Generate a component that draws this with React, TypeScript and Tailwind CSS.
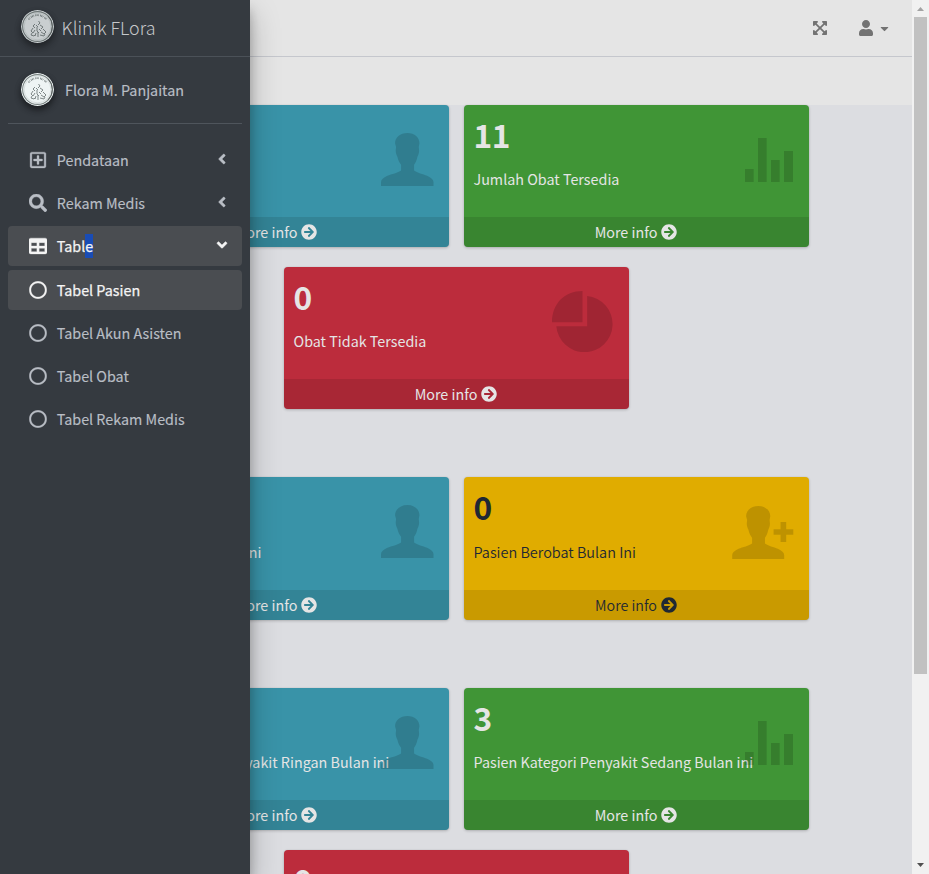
import type { ReactNode } from "react";
import {
  FaAngleDown,
  FaAngleLeft,
  FaArrowCircleRight,
  FaCaretDown,
  FaExpandArrowsAlt,
  FaRegCircle,
  FaRegPlusSquare,
  FaSearch,
  FaTable,
  FaUser,
} from "react-icons/fa";

const PERSON =
  "M79 0C101 0 115 14 115 31L113 42L114 53C114 60 112 66 109 72C107 83 103 91 99 96V113C108 120 126 124 138 129C150 135 157 140 157 148V160H0V148C0 140 7 135 19 129C31 124 51 120 60 113V96C56 91 51 83 49 72C46 66 44 60 44 53L45 42L42 31C42 14 57 0 79 0Z";

function PersonIcon() {
  return (
    <svg className="absolute right-[15.5px] top-7 h-[53px] w-[52.5px]" viewBox="0 0 157 160" preserveAspectRatio="none" fill="black" fillOpacity=".15">
      <path d={PERSON} />
    </svg>
  );
}

function PersonAddIcon() {
  return (
    <svg className="absolute right-[15.5px] top-[29px] h-[53px] w-[61.5px]" viewBox="0 0 184.5 160" fill="black" fillOpacity=".15">
      <path d={PERSON} />
      <path d="M146 48h17v22h21.5v17H163v22h-17V87h-21V70h21z" />
    </svg>
  );
}

function BarsIcon() {
  return (
    <svg className="absolute right-4 top-[33px] h-11 w-12" viewBox="0 0 144 132" fill="black" fillOpacity=".15">
      <path d="M0 93h26v39H0zM39 0h26v132H39zM78 66h26v66H78zM117 39h27v93h-27z" />
    </svg>
  );
}

function PieIcon() {
  return (
    <svg className="absolute right-4 top-6 h-[61px] w-[61px]" viewBox="0 0 184 184" fill="black" fillOpacity=".15">
      <path d="M92 0V94H0C0 38 38 0 92 0ZM106 15A85 85 0 1 1 13 106H106Z" />
    </svg>
  );
}

type BoxProps = {
  color: string;
  height?: string;
  value: string;
  label: string;
  icon: ReactNode;
  dark?: boolean;
};

function SmallBox({ color, height = "h-[142px]", value, label, icon, dark }: BoxProps) {
  return (
    <div
      className={
        "relative flex w-[345px] shrink-0 flex-col overflow-hidden rounded-[4px] shadow-[0_0_1px_rgba(0,0,0,.125),0_1px_3px_rgba(0,0,0,.2)] " +
        height + " " + color + " " + (dark ? "font-[350] text-[#1f2833]" : "text-[#e5e5e5]")
      }
    >
      <div className="flex-1 px-[9.5px] pt-[9px]">
        <h3 className="h-[42px] text-[31.7px] font-bold leading-[40px] tracking-[-0.5px]">{value}</h3>
        <p
          className={
            "whitespace-nowrap leading-6 " +
            (height === "h-[142px]" ? "mt-[11px] " : "mt-3 ") +
            (dark ? "text-[14.48px]" : "text-[14.33px]")
          }
        >
          {label}
        </p>
      </div>
      {icon}
      <div className="flex h-[30px] items-center justify-center gap-[3.5px] bg-black/10 pr-[1.5px]">
        <span className="text-[14.33px] leading-6">More info</span>
        <FaArrowCircleRight size={16} />
      </div>
    </div>
  );
}

function Seal({ dim }: { dim?: boolean }) {
  return (
    <svg
      className={"h-[33px] w-[33px] shrink-0 rounded-full shadow-[0_3px_6px_rgba(0,0,0,.3),0_4px_7px_rgba(0,0,0,.3)] " + (dim ? "opacity-80" : "")}
      viewBox="0 0 33 33"
      fill="none"
    >
      <circle cx="16.5" cy="16.5" r="16.5" fill="#eef4f4" />
      <circle cx="16.5" cy="16.5" r="14.9" stroke="#7b8483" strokeWidth="1.1" />
      <path d="M27 6A15 15 0 0 1 27 27" stroke="#59605f" strokeWidth=".9" />
      <circle cx="16.5" cy="16.5" r="13.4" stroke="#c3caca" strokeWidth=".5" />
      <path d="M7.5 9.5A11.5 11.5 0 0 1 25.5 9.5" stroke="#7a8383" strokeWidth="1.8" strokeDasharray="1 .6 .6 1.2 .8 .5" />
      <path
        d="M17.5 11l1.5 2-2 2M14 14l-2 2 2 2M19 15l3 2-2 2M12 18l-2 3 2 2 2-3M16 17v4l2 2M22 19l3 3-2 2-3-2M11 23l-1 2 3 1 2-2M17 22v5M19 25l4 1 1-2M14 26l1-3M15 15l2 2M20 21l-2-2"
        stroke="#7f8888"
        strokeWidth="1"
      />
    </svg>
  );
}

type ItemProps = { icon: ReactNode; children: ReactNode; arrow?: ReactNode; active?: boolean };

function NavItem({ icon, children, arrow, active }: ItemProps) {
  return (
    <li
      className={
        "flex h-10 items-center rounded-[4px] pl-5 pr-3 " +
        (active
          ? "bg-[#4a4d51] text-[#f4f4f4] [-webkit-text-stroke:0.25px_#f4f4f4]"
          : "text-[#b9bec5] [-webkit-text-stroke:0.15px_#b9bec5]")
      }
    >
      <span className="-mt-px flex w-5 justify-center [&_svg]:[stroke-width:10px]">{icon}</span>
      <span className="ml-[8.8px] flex-1 whitespace-nowrap text-[14.33px] leading-6">{children}</span>
      <span className="-mt-[2px] [&_svg]:[stroke-width:14px]">{arrow}</span>
    </li>
  );
}

function Sidebar() {
  return (
    <aside className="absolute inset-y-0 left-0 z-10 w-[250px] bg-[#353a40] shadow-[0_14px_28px_rgba(0,0,0,.25),0_10px_10px_rgba(0,0,0,.22)]">
      <div className="flex h-[57px] items-start border-b border-[#4b5158] pl-[21px] pt-[10px]">
        <Seal dim />
        <span className="ml-[7.5px] mt-[2px] text-[17.9px] font-light leading-[30px] text-[#c6c8cb]">Klinik FLora</span>
      </div>
      <div className="mx-2 flex h-[67px] items-start border-b border-[#4f555c] pl-[13px] pt-4">
        <Seal />
        <span className="ml-[11px] mt-[5px] text-[14.33px] leading-6 text-[#b9bec5] [-webkit-text-stroke:0.15px_#b9bec5]">
          Flora M. Panjaitan
        </span>
      </div>
      <ul className="mx-2 mt-4 flex flex-col gap-[3px]">
        <NavItem icon={<FaRegPlusSquare size={18} />} arrow={<FaAngleLeft size={16} />}>Pendataan</NavItem>
        <NavItem icon={<FaSearch size={18} />} arrow={<FaAngleLeft size={16} />}>Rekam Medis</NavItem>
        <NavItem icon={<FaTable size={18} />} arrow={<FaAngleDown size={16} />} active>
          Tabl<span className="inline-block h-6 bg-[#194cb5] align-top">e</span>
        </NavItem>
      </ul>
      <ul className="mx-2 mt-1 flex flex-col gap-[3px]">
        <NavItem icon={<FaRegCircle size={18} />} active>Tabel Pasien</NavItem>
        <NavItem icon={<FaRegCircle size={18} />}>Tabel Akun Asisten</NavItem>
        <NavItem icon={<FaRegCircle size={18} />}>Tabel Obat</NavItem>
        <NavItem icon={<FaRegCircle size={18} />}>Tabel Rekam Medis</NavItem>
      </ul>
    </aside>
  );
}

function Scrollbar() {
  return (
    <div className="flex w-[17px] shrink-0 flex-col items-center bg-[#f1f1f1]">
      <div className="flex h-[17px] shrink-0 items-center">
        <svg width="7" height="4" viewBox="0 0 7 4" fill="#a3a3a3"><path d="M3.5 0L7 4H0z" /></svg>
      </div>
      <div className="h-[657px] w-[13px] bg-[#c1c1c1]" />
      <div className="mt-auto flex h-[18px] shrink-0 items-center">
        <svg width="7" height="4" viewBox="0 0 7 4" fill="#505050"><path d="M0 0H7L3.5 4z" /></svg>
      </div>
    </div>
  );
}

export default function App() {
  return (
    <div className="relative flex h-[874px] w-[929px] overflow-hidden bg-[#dcdde1] font-['Noto_Sans_CJK_SC','Source_Sans_Pro',sans-serif]">
      <div className="flex w-[912px] shrink-0 flex-col">
        <header className="flex h-[57px] shrink-0 items-center justify-end border-b border-[#c5c7cd] bg-[#e5e5e5] pr-[21.5px] text-[#737373]">
          <FaExpandArrowsAlt size={16} />
          <FaUser size={16} className="ml-[30px]" />
          <FaCaretDown size={13} className="ml-[3.5px]" />
        </header>
        <div className="h-12 shrink-0 bg-[#e5e5e5]" />
        <main className="flex flex-col pl-[104px]">
          <section className="flex w-[705px] flex-col items-center gap-5">
            <div className="flex gap-[15px]">
              <SmallBox color="bg-[#3993a8]" value="5" label="Jumlah Pasien" icon={<PersonIcon />} />
              <SmallBox color="bg-[#409536]" value="11" label="Jumlah Obat Tersedia" icon={<BarsIcon />} />
            </div>
            <SmallBox color="bg-[#bc2c3c]" value="0" label="Obat Tidak Tersedia" icon={<PieIcon />} />
          </section>
          <section className="mt-[68px] flex w-[705px] gap-[15px]">
            <SmallBox height="h-[143px]" color="bg-[#3993a8]" value="0" label="Pasien Balita Bulan Ini" icon={<PersonIcon />} />
            <SmallBox height="h-[143px]" color="bg-[#e0ac00]" value="0" label="Pasien Berobat Bulan Ini" icon={<PersonAddIcon />} dark />
          </section>
          <section className="mt-[68px] flex w-[705px] flex-col items-center gap-5">
            <div className="flex gap-[15px]">
              <SmallBox color="bg-[#3993a8]" value="2" label="Pasien Kategori Penyakit Ringan Bulan ini" icon={<PersonIcon />} />
              <SmallBox color="bg-[#409536]" value="3" label="Pasien Kategori Penyakit Sedang Bulan ini" icon={<BarsIcon />} />
            </div>
            <SmallBox color="bg-[#bc2c3c]" value="0" label="Pasien Kategori Penyakit Berat Bulan ini" icon={<PieIcon />} />
          </section>
        </main>
      </div>
      <Scrollbar />
      <Sidebar />
    </div>
  );
}
